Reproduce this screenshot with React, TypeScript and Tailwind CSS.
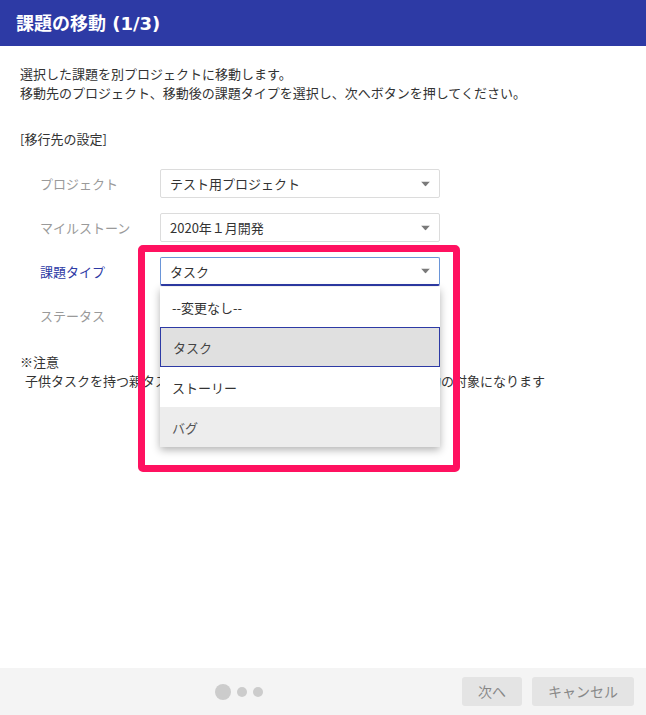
import { useState } from "react";

type Row = {
  label: string;
  value: string;
  active?: boolean;
};

const rows: Row[] = [
  { label: "プロジェクト", value: "テスト用プロジェクト" },
  { label: "マイルストーン", value: "2020年１月開発" },
  { label: "課題タイプ", value: "タスク", active: true },
  { label: "ステータス", value: "" },
];

const options = ["--変更なし--", "タスク", "ストーリー", "バグ"];

function Caret() {
  return (
    <svg width="9" height="5" viewBox="0 0 9 5" className="absolute right-[9px] top-1/2 -translate-y-1/2">
      <path d="M0 0h9L4.5 5z" fill="#7a7a7a" />
    </svg>
  );
}

function Dropdown({ selected }: { selected: string }) {
  return (
    <div className="absolute left-0 top-[30px] z-20 w-[280px] bg-white shadow-[0_3px_8px_rgba(0,0,0,0.3)]">
      {options.map((opt) => {
        const isSelected = opt === selected;
        const isHover = opt === "バグ";

        return (
          <div
            key={opt}
            className={`flex h-[40px] items-center px-[12px] text-[13px] ${
              isSelected
                ? "border border-[#2d3aa5] bg-[#e0e0e0] text-[#444]"
                : isHover
                ? "bg-[#ededed] text-[#555]"
                : "text-[#333]"
            }`}
          >
            {opt}
          </div>
        );
      })}
    </div>
  );
}

export default function App() {
  const [selected] = useState("タスク");

  return (
    <div
      className="flex h-[715px] w-[646px] flex-col bg-white"
      style={{ fontFamily: '"Noto Sans CJK JP", "Noto Sans", sans-serif' }}
    >
      <div className="flex h-[46px] shrink-0 items-center bg-[#2d3aa5] px-[16px]">
        <h1
          className="text-[18px] font-bold text-white"
          style={{ fontFamily: '"DejaVu Sans", "Noto Sans CJK JP", sans-serif' }}
        >
          課題の移動 (1/3)
        </h1>
      </div>

      <div className="flex-1 px-[20px] pt-[18px] text-[13px] leading-[19px] text-[#333]">
        <p>選択した課題を別プロジェクトに移動します。</p>
        <p>移動先のプロジェクト、移動後の課題タイプを選択し、次へボタンを押してください。</p>

        <p className="mt-[27px]">[移行先の設定]</p>

        <div className="mt-[21px] space-y-[15px] pl-[20px]">
          {rows.map((row) => (
            <div key={row.label} className="flex items-center">
              <div
                className={`w-[120px] text-[13px] ${
                  row.active ? "text-[#2d3aa5]" : "text-[#9a9a9a]"
                }`}
              >
                {row.label}
              </div>
              <div className="relative w-[280px]">
                <div
                  className={`relative flex h-[29px] items-center rounded-[2px] bg-white pl-[9px] text-[13px] text-[#333] ${
                    row.active
                      ? "border border-[#6a95d8] border-b-2 border-b-[#2d3aa5]"
                      : "border border-[#dcdcdc]"
                  }`}
                >
                  {row.value}
                  <Caret />
                </div>
                {row.active ? (
                  <>
                    <Dropdown selected={selected} />
                    <div className="pointer-events-none absolute left-[-22px] top-[-12px] z-30 h-[227px] w-[322px] rounded-[5px] border-[7px] border-[#ff1160]" />
                  </>
                ) : null}
              </div>
            </div>
          ))}
        </div>

        <div className="mt-[22px]">
          <p>※注意</p>
          <p className="pl-[5px]">
            子供タスクを持つ親タスクを移動した場合は、子供タスクも一緒に移動の対象になります
          </p>
        </div>
      </div>

      <div className="flex h-[47px] shrink-0 items-center bg-[#f4f4f4] pr-[12px]">
        <div className="flex flex-1 items-center gap-[6px] pl-[215px]">
          <span className="h-[16px] w-[16px] rounded-full bg-[#cccccc]" />
          <span className="h-[10px] w-[10px] rounded-full bg-[#cccccc]" />
          <span className="h-[10px] w-[10px] rounded-full bg-[#cccccc]" />
        </div>
        <div className="flex gap-[10px]">
          <button className="h-[29px] w-[60px] rounded-[3px] bg-[#e4e4e4] text-[14px] text-[#888]">
            次へ
          </button>
          <button className="h-[29px] w-[102px] rounded-[3px] bg-[#e4e4e4] text-[14px] text-[#888]">
            キャンセル
          </button>
        </div>
      </div>
    </div>
  );
}
